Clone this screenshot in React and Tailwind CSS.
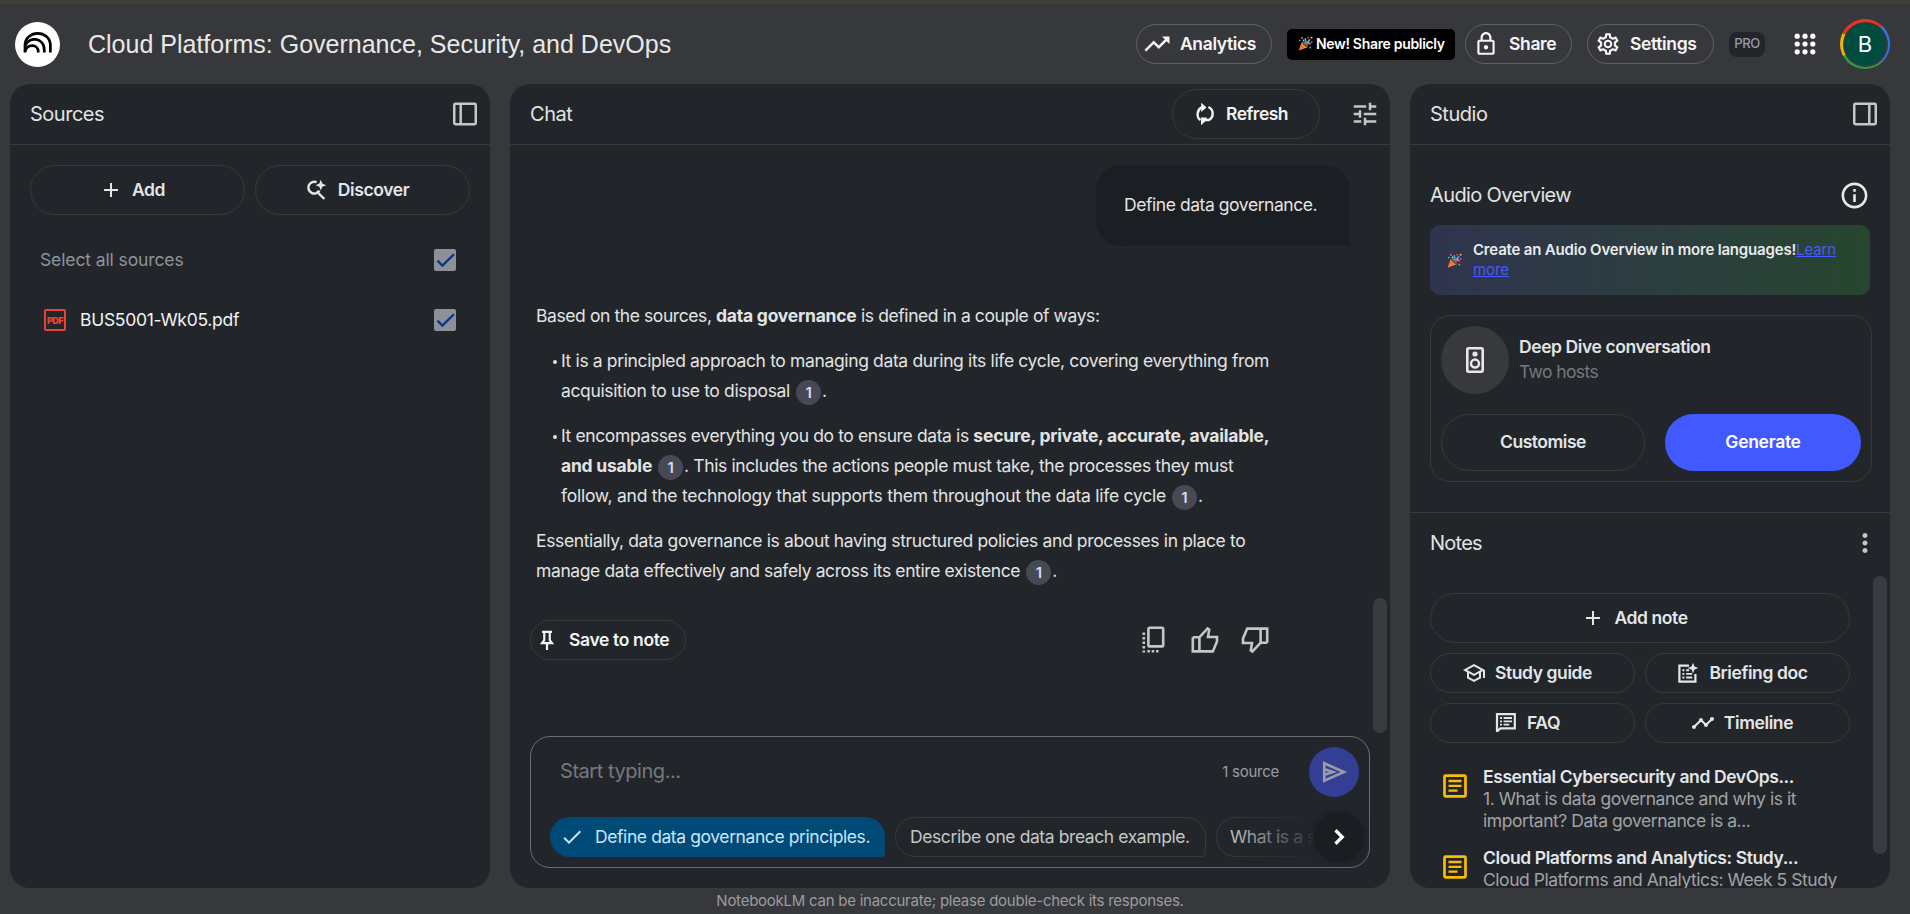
import {
  MdAdd, MdCheck, MdMoreVert, MdOutlineInfo, MdOutlineLock,
  MdOutlineSchool, MdOutlineSettings, MdTimeline, MdTrendingUp, MdTune,
} from 'react-icons/md';

function Logo() {
  return (
    <svg className="size-[45px] shrink-0" viewBox="0 0 45 45" fill="none">
      <circle cx="22.5" cy="22.5" r="22.5" fill="#fff" />
      <g stroke="#000" strokeWidth="2.7">
        <path d="M10 30.6V23.5C10 7.4 35.4 7.4 35.4 23.5V30.6" />
        <path d="M10 24C13.5 14 29.3 15 29.3 28.2V30.6" />
        <path d="M10 29.6C12 21.4 23.2 22 23.2 29.4V30.6" />
      </g>
    </svg>
  );
}

function Party({ className }) {
  return (
    <svg className={className} viewBox="0 0 16 16" fill="none">
      <path d="M4.2 6 .8 15.4 10.2 12z" fill="#f9a825" />
      <path d="M3 9.4 6.4 13.4M2 12.2 4 14.3" stroke="#ec407a" strokeWidth="1.3" />
      <ellipse cx="7.2" cy="9" rx="1.7" ry="4.2" transform="rotate(-45 7.2 9)" fill="#8d5524" />
      <path d="M7 7.5C8.5 6 8.5 4 7.5 2.2" stroke="#29b6f6" strokeWidth="1.6" />
      <path d="M9 9c1.5-1.2 3.5-1.3 5-.3" stroke="#ec407a" strokeWidth="1.6" />
      <path d="M8.5 7.8 13 3.6" stroke="#42a5f5" strokeWidth="1.7" />
      <g fill="#ec407a"><rect x="3.2" y="1" width="2" height="2" /><rect x="13.7" y="5.4" width="1.8" height="1.8" /><rect x="10" y="1" width="1.7" height="1.7" /></g>
      <g fill="#29b6f6"><rect x="1" y="4" width="1.7" height="1.7" /><rect x="12.2" y="11.4" width="1.8" height="1.8" /></g>
      <g fill="#fdd835"><rect x="5.2" y="3.8" width="1.6" height="1.6" /><rect x="13.6" y="1" width="1.7" height="1.7" /><rect x="10.8" y="6.2" width="1.5" height="1.5" /></g>
    </svg>
  );
}

function AppsIcon() {
  return (
    <svg className="ml-[25px] size-[30px] shrink-0 text-white" viewBox="0 0 30 30" fill="currentColor">
      {[7.2, 15, 22.8].map((y) => [7.2, 15, 22.8].map((x) => <circle key={`${x}-${y}`} cx={x} cy={y} r="2.6" />))}
    </svg>
  );
}

function PanelIcon({ right }) {
  return (
    <svg className="size-[24px] text-[#c4c7c5]" viewBox="0 0 24 24" fill="none" stroke="currentColor" strokeWidth="2.5">
      <rect x="1.25" y="1.75" width="21.5" height="20.5" rx="1.2" />
      <path d={right ? 'M16.3 2V22' : 'M7.7 2V22'} />
    </svg>
  );
}

function DiscoverIcon() {
  return (
    <svg className="size-[24px]" viewBox="0 0 24 24" fill="none">
      <path d="M11.6 4.2A5.9 5.9 0 1 0 14.4 12.6M11.6 13.4 19.4 21" stroke="currentColor" strokeWidth="2.4" />
      <path d="M15.8 1.8 17.3 5.6 21.2 7.2 17.3 8.8 15.8 12.6 14.3 8.8 10.6 7.2 14.3 5.6z" fill="currentColor" />
    </svg>
  );
}

function RefreshIcon() {
  return (
    <svg className="size-[24px]" viewBox="0 0 24 24" fill="none">
      <path d="M7.2 18.2A7.9 7.9 0 0 1 9 5.2M15.4 5A7.3 7.3 0 0 1 16 18H10.5" stroke="currentColor" strokeWidth="2.4" />
      <path d="M8.2.8 13.6 5.6 8.2 10zM7.8 15.4H13.8L13.2 18.6 8 23.2z" fill="currentColor" />
    </svg>
  );
}

function PinIcon() {
  return (
    <svg className="size-[22px]" viewBox="0 0 24 24" fill="none" stroke="currentColor" strokeWidth="2.4">
      <path d="M6.5 3.2h11M9 3v9.2L6.6 15.4H17.4L15 12.2V3M12 15.5V23" />
    </svg>
  );
}

function CopyIcon() {
  return (
    <svg className="size-[28px]" viewBox="0 0 28 28" fill="none" stroke="currentColor" strokeWidth="2.6">
      <rect x="7.4" y="1.8" width="14.8" height="18.6" rx="1.2" />
      <path d="M2.8 6.5V26.6" strokeDasharray="2.5 2" />
      <path d="M6.4 25.3H19" strokeDasharray="2.5 1.8" />
    </svg>
  );
}

function ThumbIcon({ down }) {
  return (
    <svg className={down ? 'size-[28px] rotate-180' : 'size-[28px]'} viewBox="0 0 28 28" fill="none" stroke="currentColor" strokeWidth="2.6">
      <path d="M1.8 11.3V25.4H21.8L26 15.6V11H17L18.2 3.6 16.6 2.4 8.4 11.3H1.8M8.4 11.3V25.4" />
    </svg>
  );
}

function SendIcon() {
  return (
    <svg className="size-[28px] text-[#9a9ca6]" viewBox="0 0 28 28" fill="none">
      <path d="M4.2 5.2 24 14 4.2 22.8zM4.5 11.2 13 14 4.5 16.8" stroke="currentColor" strokeWidth="2.6" />
    </svg>
  );
}

function SpeakerIcon() {
  return (
    <svg className="h-[26px] w-[18px] text-[#e8e8e8]" viewBox="0 0 18 26" fill="none" stroke="currentColor">
      <rect x="1.3" y="1.3" width="15.4" height="23.4" rx="1.4" strokeWidth="2.6" />
      <circle cx="9" cy="7" r="2.6" fill="currentColor" stroke="none" />
      <circle cx="9" cy="16.6" r="4" strokeWidth="2.5" />
    </svg>
  );
}

function BriefingIcon() {
  return (
    <svg className="size-[24px]" viewBox="0 0 24 24" fill="none">
      <path d="M13 4.6H3.4V20.6H19.4V13" stroke="currentColor" strokeWidth="2.2" />
      <path d="M6.4 9.3h2M10.2 9.3h3M6.4 12.9h2M10.2 12.9h6M6.4 16.5h2M10.2 16.5h6" stroke="currentColor" strokeWidth="1.9" />
      <path d="M17 1.8 18.5 5.6 22.4 7 18.5 8.4 17 12.2 15.5 8.4 11.6 7 15.5 5.6z" fill="currentColor" />
    </svg>
  );
}

function FaqIcon() {
  return (
    <svg className="size-[24px]" viewBox="0 0 24 24" fill="none" stroke="currentColor">
      <path d="M3 21V3.2H20.8V17.4H6.4L3 20.4" strokeWidth="2.2" />
      <path d="M6 7h2M9.6 7H18M6 10.3h2M9.6 10.3H18M6 13.6h2M9.6 13.6h5.6" strokeWidth="1.8" />
    </svg>
  );
}

function NoteIcon() {
  return (
    <svg className="size-[24px] shrink-0 text-[#fbbc04]" viewBox="0 0 24 24" fill="none" stroke="currentColor">
      <rect x="1.5" y="1.7" width="21" height="20.6" rx="1" strokeWidth="2.7" />
      <path d="M5.5 7h13M5.5 11.8h13M5.5 16.6h9" strokeWidth="2.3" />
    </svg>
  );
}

function Checkbox() {
  return (
    <span className="flex size-[22px] items-center justify-center rounded-[2px] bg-[#8d9099]">
      <svg className="size-[22px]" viewBox="0 0 22 22" fill="none" stroke="#0a3880" strokeWidth="2.3">
        <path d="M3.5 11.6 8.4 16.6 20 5.2" />
      </svg>
    </span>
  );
}

function PillButton({ icon, label, className = '' }) {
  return (
    <button className={`flex items-center justify-center gap-[9px] rounded-[25px] border border-[#35393c] pr-[11px] text-[17.5px] font-semibold tracking-[-0.4px] text-[#e3e5e8] ${className}`}>
      {icon}
      <span>{label}</span>
    </button>
  );
}

function PanelHeader({ title, children }) {
  return (
    <div className="flex h-[61px] shrink-0 items-center justify-between border-b border-[#37393b] px-5 pr-[13px]">
      <h2 className="text-[20px] leading-none tracking-[-0.48px] text-[#e3e3e3]">{title}</h2>
      {children}
    </div>
  );
}

function Cite() {
  return (
    <span className="mr-[1px] ml-[6px] inline-flex size-[25px] items-center justify-center rounded-full bg-[#474a54] align-middle text-[15px] leading-none font-semibold text-[#d5dbf5]">
      1
    </span>
  );
}

function Bullet() {
  return <span className="absolute top-[14px] left-[-8px] size-[4px] rounded-full bg-[#e3e3e3]" />;
}

function Note({ title, lines, className = '' }) {
  return (
    <div className={`flex gap-[16px] pl-[13px] ${className}`}>
      <div className="pt-[8px]"><NoteIcon /></div>
      <div className="text-[17.5px] leading-[22px] whitespace-nowrap">
        <div className="font-semibold tracking-[-0.4px] text-[#e3e5e8]">{title}</div>
        {lines.map((l) => (
          <div key={l} className="tracking-[-0.45px] text-[#a0a3a5]">{l}</div>
        ))}
      </div>
    </div>
  );
}

function Header() {
  const pill = 'flex h-[40px] items-center rounded-full border border-[#5f6163] text-[17.5px] font-semibold tracking-[-0.36px] text-[#f5f5f5]';
  return (
    <header className="flex h-[84px] shrink-0 items-center border-t-[4px] border-[#3e4039] pr-[20px] pl-[15px]">
      <Logo />
      <h1 className="ml-[28px] grow pt-[2px] font-['Liberation_Sans',sans-serif] text-[25px] text-[#e8e8e8]">
        Cloud Platforms: Governance, Security, and DevOps
      </h1>
      <button className={`${pill} w-[136px] gap-[8px] pl-[5px]`}><MdTrendingUp className="size-[30px]" />Analytics</button>
      <div className="ml-[15px] flex h-[31px] w-[168px] items-center gap-[3px] rounded-[5px] bg-black pb-[2px] pl-[11px] text-[14px] font-semibold tracking-[-0.32px] whitespace-nowrap text-white">
        <Party className="size-[15px] shrink-0" />New! Share publicly
      </div>
      <button className={`${pill} ml-[10px] w-[107px] gap-[10px] pl-[7px]`}><MdOutlineLock className="size-[26px]" />Share</button>
      <button className={`${pill} ml-[15px] w-[127px] gap-[9px] pl-[7px]`}><MdOutlineSettings className="size-[26px]" />Settings</button>
      <span className="ml-[15px] flex h-[25px] w-[36px] items-center justify-center rounded-[8px] bg-[#22262b] text-[13px] font-medium tracking-[-0.4px] text-[#9a9ca8]">PRO</span>
      <AppsIcon />
      <div className="ml-[20px] flex size-[50px] items-center justify-center rounded-full bg-[conic-gradient(#ea3323_0_12%,#3174f1_12%_38%,#2a9d48_38%_67%,#f4b400_67%_82%,#ea3323_82%)]">
        <div className="flex size-[45px] items-center justify-center rounded-full bg-[#37383b]">
          <div className="flex size-[42px] items-center justify-center rounded-full bg-[#004d40] text-[22px] text-white">B</div>
        </div>
      </div>
    </header>
  );
}

function Sources() {
  return (
    <section className="flex w-[480px] shrink-0 flex-col overflow-hidden rounded-[20px] bg-[#22262b]">
      <PanelHeader title="Sources"><PanelIcon /></PanelHeader>
      <div className="flex gap-[10px] px-[20px] pt-[20px]">
        <PillButton className="h-[50px] w-[215px]" icon={<MdAdd className="size-[24px]" />} label="Add" />
        <PillButton className="h-[50px] w-[215px]" icon={<DiscoverIcon />} label="Discover" />
      </div>
      <div className="mt-[25px] flex h-[40px] items-center justify-between pr-[34px] pl-[30px] text-[17.5px] tracking-[-0.11px] text-[#8e9499]">
        Select all sources
        <Checkbox />
      </div>
      <div className="mt-[20px] flex h-[40px] items-center pr-[34px] pl-[34px] text-[17.5px] tracking-[-0.29px] text-[#f1f3f4]">
        <span className="mr-[14px] flex size-[22px] items-center justify-center rounded-[2px] border-[2.5px] border-[#e94235] text-[9px] leading-none font-black tracking-[-0.6px] text-[#e94235]">PDF</span>
        <span className="grow">BUS5001-Wk05.pdf</span>
        <Checkbox />
      </div>
    </section>
  );
}

function Chat() {
  return (
    <section className="relative flex w-[880px] shrink-0 flex-col overflow-hidden rounded-[20px] bg-[#22262b]">
      <PanelHeader title="Chat">
        <div className="flex items-center gap-[30px]">
          <button className="flex h-[50px] w-[148px] items-center gap-[9px] rounded-full border border-[#35393c] pl-[20px] text-[17.5px] font-semibold tracking-[-0.5px] text-[#f1f3f4]">
            <RefreshIcon />Refresh
          </button>
          <MdTune className="mr-[-3px] size-[30px] text-[#c4c7c5]" />
        </div>
      </PanelHeader>
      <div className="mt-[20px] mr-[40px] flex h-[81px] w-[254px] items-center self-end rounded-[25px] rounded-br-none bg-[#1b1e22] pl-[28px] text-[17.5px] tracking-[-0.44px] text-[#e3e3e3]">
        Define data governance.
      </div>
      <div className="mt-[55px] ml-[26px] flex flex-col gap-[15px] text-[17.5px] leading-[30px] tracking-[-0.36px] whitespace-nowrap text-[#e3e3e3]">
        <p className="h-[30px] tracking-[-0.41px]">Based on the sources, <b className="font-bold tracking-[-0.24px]">data governance</b> is defined in a couple of ways:</p>
        <ul className="flex flex-col gap-[15px] pl-[25px]">
          <li className="relative">
            <Bullet />
            <div className="h-[30px]">It is a principled approach to managing data during its life cycle, covering everything from</div>
            <div className="h-[30px]">acquisition to use to disposal<Cite />.</div>
          </li>
          <li className="relative">
            <Bullet />
            <div className="h-[30px] tracking-[-0.38px]">It encompasses everything you do to ensure data is <b className="font-bold tracking-[-0.23px]">secure, private, accurate, available,</b></div>
            <div className="h-[30px] tracking-[-0.38px]"><b className="font-bold tracking-[-0.22px]">and usable</b><Cite />. This includes the actions people must take, the processes they must</div>
            <div className="h-[30px] tracking-[-0.26px]">follow, and the technology that supports them throughout the data life cycle<Cite />.</div>
          </li>
        </ul>
        <div>
          <div className="h-[30px]">Essentially, data governance is about having structured policies and processes in place to</div>
          <div className="h-[30px] tracking-[-0.39px]">manage data effectively and safely across its entire existence<Cite />.</div>
        </div>
      </div>
      <div className="mt-[34px] mr-[121px] ml-[20px] flex items-center">
        <button className="flex h-[40px] w-[156px] items-center gap-[11px] rounded-full border border-[#35393c] pl-[5px] text-[17.5px] font-semibold tracking-[-0.36px] text-[#f1f3f4]">
          <PinIcon />Save to note
        </button>
        <div className="ml-auto flex items-center gap-[22px] text-[#c4c7c5]">
          <CopyIcon />
          <ThumbIcon />
          <ThumbIcon down />
        </div>
      </div>
      <div className="absolute top-[514px] right-[3px] h-[135px] w-[14px] rounded-full bg-[#383b40]" />
      <div className="mx-[20px] mt-auto mb-[20px] h-[132px] shrink-0 rounded-[20px] border border-[#6b6f73]">
        <div className="flex items-center pt-[10px] pr-[10px] pl-[29px]">
          <span className="grow pb-[2px] text-[20px] tracking-[-0.45px] text-[#77797c]">Start typing...</span>
          <span className="mr-[30px] text-[15px] tracking-[-0.25px] text-[#9a9da0]">1 source</span>
          <button className="flex size-[50px] items-center justify-center rounded-full bg-[#333f94]"><SendIcon /></button>
        </div>
        <div className="mt-[20px] ml-[19px] flex h-[40px] gap-[10px] text-[17.5px] tracking-[-0.41px] whitespace-nowrap">
          <div className="flex w-[335px] items-center gap-[11px] rounded-[20px] rounded-br-[4px] bg-[#004a77] pl-[10px] text-[#c9e5fb]">
            <MdCheck className="size-[24px]" />Define data governance principles.
          </div>
          <div className="flex w-[311px] items-center rounded-[20px] rounded-br-[4px] border border-[#35393c] pl-[14px] text-[#c4c7c5]">
            Describe one data breach example.
          </div>
          <div className="relative w-[150px]">
            <div className="flex h-full w-[118px] items-center rounded-l-[20px] border border-r-0 border-[#35393c] pl-[13px] text-[#c4c7c5]">What is a s</div>
            <div className="absolute inset-y-0 left-[10px] w-[110px] bg-linear-to-r from-transparent to-[#22262b] to-85%" />
            <div className="absolute top-[-5px] left-[98px] flex size-[50px] items-center justify-center rounded-full bg-[#1a1d21] shadow-[0_0_8px_rgba(0,0,0,0.25)]">
              <svg className="size-[30px] text-white" viewBox="0 0 24 24" fill="none" stroke="currentColor" strokeWidth="2.6">
                <path d="M9.2 6.6 14.6 12 9.2 17.4" />
              </svg>
            </div>
          </div>
        </div>
      </div>
    </section>
  );
}

function Studio() {
  return (
    <section className="flex w-[480px] shrink-0 flex-col overflow-hidden rounded-[20px] bg-[#22262b]">
      <PanelHeader title="Studio"><PanelIcon right /></PanelHeader>
      <div className="flex h-[368px] shrink-0 flex-col border-b border-[#37393b] px-[20px]">
        <div className="mt-[25px] flex h-[50px] items-center justify-between">
          <h3 className="text-[20px] tracking-[-0.62px] text-[#e3e3e3]">Audio Overview</h3>
          <MdOutlineInfo className="size-[31px] text-[#e8e8e8]" />
        </div>
        <div className="mt-[5px] flex h-[70px] items-center rounded-[10px] bg-linear-to-r from-[#30344e] to-[#27452f] pl-[17px] text-[15px] leading-[20px] tracking-[-0.1px]">
          <Party className="mr-[11px] size-[15px] shrink-0" />
          <p className="whitespace-nowrap text-[#e8eaed]">
            <span className="font-semibold tracking-[-0.18px]">Create an Audio Overview in more languages!</span><a className="text-[#4759ff] underline">Learn<br />more</a>
          </p>
        </div>
        <div className="mt-[20px] h-[167px] w-[442px] rounded-[20px] border border-[#35393c] px-[10px] pt-[10px]">
          <div className="flex items-center">
            <div className="flex size-[68px] items-center justify-center rounded-full bg-[#38393c]"><SpeakerIcon /></div>
            <div className="ml-[10px] pb-[2px] text-[17.5px] leading-[25px]">
              <div className="font-semibold tracking-[-0.42px] text-[#e3e3e3]">Deep Dive conversation</div>
              <div className="tracking-[-0.6px] text-[#75787b]">Two hosts</div>
            </div>
          </div>
          <div className="mt-[20px] flex gap-[20px]">
            <button className="h-[57px] w-[204px] rounded-full border border-[#35393c] text-[17.5px] font-semibold tracking-[-0.48px] text-[#e3e5e8]">Customise</button>
            <button className="h-[57px] w-[196px] rounded-full bg-[#4259ff] text-[17.5px] font-semibold tracking-[-0.3px] text-white">Generate</button>
          </div>
        </div>
      </div>
      <div className="flex h-[60px] shrink-0 items-center justify-between pr-[10px] pl-[20px]">
        <h3 className="text-[20px] tracking-[-0.75px] text-[#e3e3e3]">Notes</h3>
        <MdMoreVert className="size-[30px] text-[#c4c7c5]" />
      </div>
      <div className="flex min-h-0 grow justify-between overflow-hidden pr-[3px] pl-[20px]">
        <div className="w-[420px] pt-[20px]">
          <PillButton className="h-[50px] w-full" icon={<MdAdd className="size-[24px]" />} label="Add note" />
          <div className="mt-[10px] grid grid-cols-2 gap-[10px]">
            <PillButton className="h-[40px]" icon={<MdOutlineSchool className="size-[24px]" />} label="Study guide" />
            <PillButton className="h-[40px]" icon={<BriefingIcon />} label="Briefing doc" />
            <PillButton className="h-[40px]" icon={<FaqIcon />} label="FAQ" />
            <PillButton className="h-[40px]" icon={<MdTimeline className="size-[24px]" />} label="Timeline" />
          </div>
          <Note className="mt-[23px]" title="Essential Cybersecurity and DevOps..." lines={['1. What is data governance and why is it', 'important? Data governance is a...']} />
          <Note className="mt-[15px]" title="Cloud Platforms and Analytics: Study..." lines={['Cloud Platforms and Analytics: Week 5 Study']} />
        </div>
        <div className="mt-[3px] h-[278px] w-[14px] rounded-full bg-[#383b40]" />
      </div>
    </section>
  );
}

export default function App() {
  return (
    <div className="flex h-[914px] w-[1910px] flex-col overflow-hidden bg-[#37383b] font-['Inter',sans-serif]">
      <Header />
      <main className="flex h-[804px] shrink-0 gap-[20px] pl-[10px]">
        <Sources />
        <Chat />
        <Studio />
      </main>
      <footer className="flex grow items-center justify-center pr-[10px] text-[15px] tracking-[-0.25px] text-[#9a9da0]">
        NotebookLM can be inaccurate; please double-check its responses.
      </footer>
    </div>
  );
}
